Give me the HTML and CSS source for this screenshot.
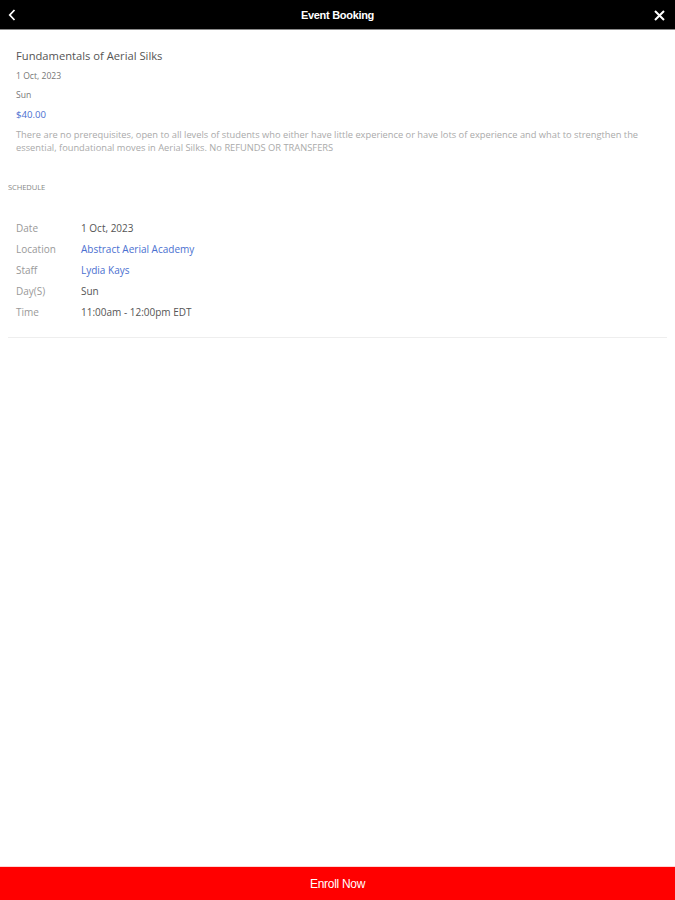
FILE: index.html
```html
<!DOCTYPE html>
<html>
<head>
	<title>Event Booking</title>
	<meta charset="utf-8" />
	<link rel="stylesheet" href="styles.css">
</head>
<body>
	<div class="page">
		<div class="top">
			<span class="top-back">
				<svg width="8" height="12" viewBox="0 0 8 12"><path d="M6.5 1 L1.8 6 L6.5 11" fill="none" stroke="#fff" stroke-width="1.8"/></svg>
			</span>
			<p class="top-title">Event Booking</p>
			<span class="top-close">
				<svg width="11" height="11" viewBox="0 0 11 11"><path d="M1 1 L10 10 M10 1 L1 10" fill="none" stroke="#fff" stroke-width="2"/></svg>
			</span>
		</div>

		<div class="content">
			<div class="event">
				<h1 class="event-name">Fundamentals of Aerial Silks</h1>
				<p class="event-small">1 Oct, 2023</p>
				<p class="event-small">Sun</p>
				<p class="event-price">$40.00</p>
				<p class="event-desc">There are no prerequisites, open to all levels of students who either have little experience or have lots of experience and what to strengthen the essential, foundational moves in Aerial Silks. No REFUNDS OR TRANSFERS</p>
			</div>

			<p class="section">SCHEDULE</p>

			<div class="schedule">
				<div class="row"><span class="label">Date</span><span class="value">1 Oct, 2023</span></div>
				<div class="row"><span class="label">Location</span><span class="value link">Abstract Aerial Academy</span></div>
				<div class="row"><span class="label">Staff</span><span class="value link">Lydia Kays</span></div>
				<div class="row"><span class="label">Day(S)</span><span class="value">Sun</span></div>
				<div class="row"><span class="label">Time</span><span class="value">11:00am - 12:00pm EDT</span></div>
			</div>
		</div>

		<div class="enroll">Enroll Now</div>
	</div>
</body>
</html>
```

FILE: styles.css
```css
*{
	padding: 0px;
	margin: 0px;
	box-sizing: border-box;
}
body{
	font-family: "Open Sans", "Liberation Sans", sans-serif;
	background: #fff;
}
.page{
	height: 900px;
	display: flex;
	flex-direction: column;
}
.top{
	height: 30px;
	background: #000;
	border-bottom: 1px solid #8a8a8a;
	display: flex;
	align-items: center;
	padding: 0 8px;
}
.top-back{
	width: 20px;
	display: flex;
	padding-top: 1px;
}
.top-title{
	flex: 1;
	text-align: center;
	color: #fff;
	font-family: "Liberation Sans", Arial, sans-serif;
	font-weight: bold;
	font-size: 11px;
	letter-spacing: -0.3px;
}
.top-close{
	width: 20px;
	display: flex;
	justify-content: flex-end;
	padding-right: 2px;
	padding-top: 1px;
}
.content{
	flex: 1;
	padding: 0 8px;
}
.event{
	padding: 18px 8px 0;
}
.event-name{
	font-size: 11.2px;
	font-weight: normal;
	color: #555;
	line-height: 16px;
	margin-bottom: 7px;
}
.event-small{
	font-size: 8.6px;
	color: #777;
	line-height: 11px;
	margin-bottom: 8px;
}
.event-price{
	font-size: 9.6px;
	color: #4a6fd0;
	line-height: 12px;
	margin-bottom: 7px;
}
.event-desc{
	font-size: 9.3px;
	color: #aaa;
	line-height: 13px;
}
.section{
	font-size: 7.6px;
	color: #888;
	margin-top: 28px;
	letter-spacing: -0.1px;
}
.schedule{
	margin-top: 30px;
	padding: 0 8px 18px;
	border-bottom: 1px solid #eee;
	display: flex;
	flex-direction: column;
	gap: 8px;
}
.row{
	display: flex;
	font-size: 10px;
	line-height: 13px;
}
.label{
	width: 65px;
	color: #999;
}
.value{
	color: #555;
}
.link{
	color: #4a6fd0;
}
.enroll{
	height: 34px;
	background: #ff0000;
	border-top: 1px solid #ffd6d6;
	color: #fff;
	font-family: "Liberation Sans", Arial, sans-serif;
	font-size: 12px;
	letter-spacing: -0.3px;
	display: flex;
	align-items: center;
	justify-content: center;
}
```
